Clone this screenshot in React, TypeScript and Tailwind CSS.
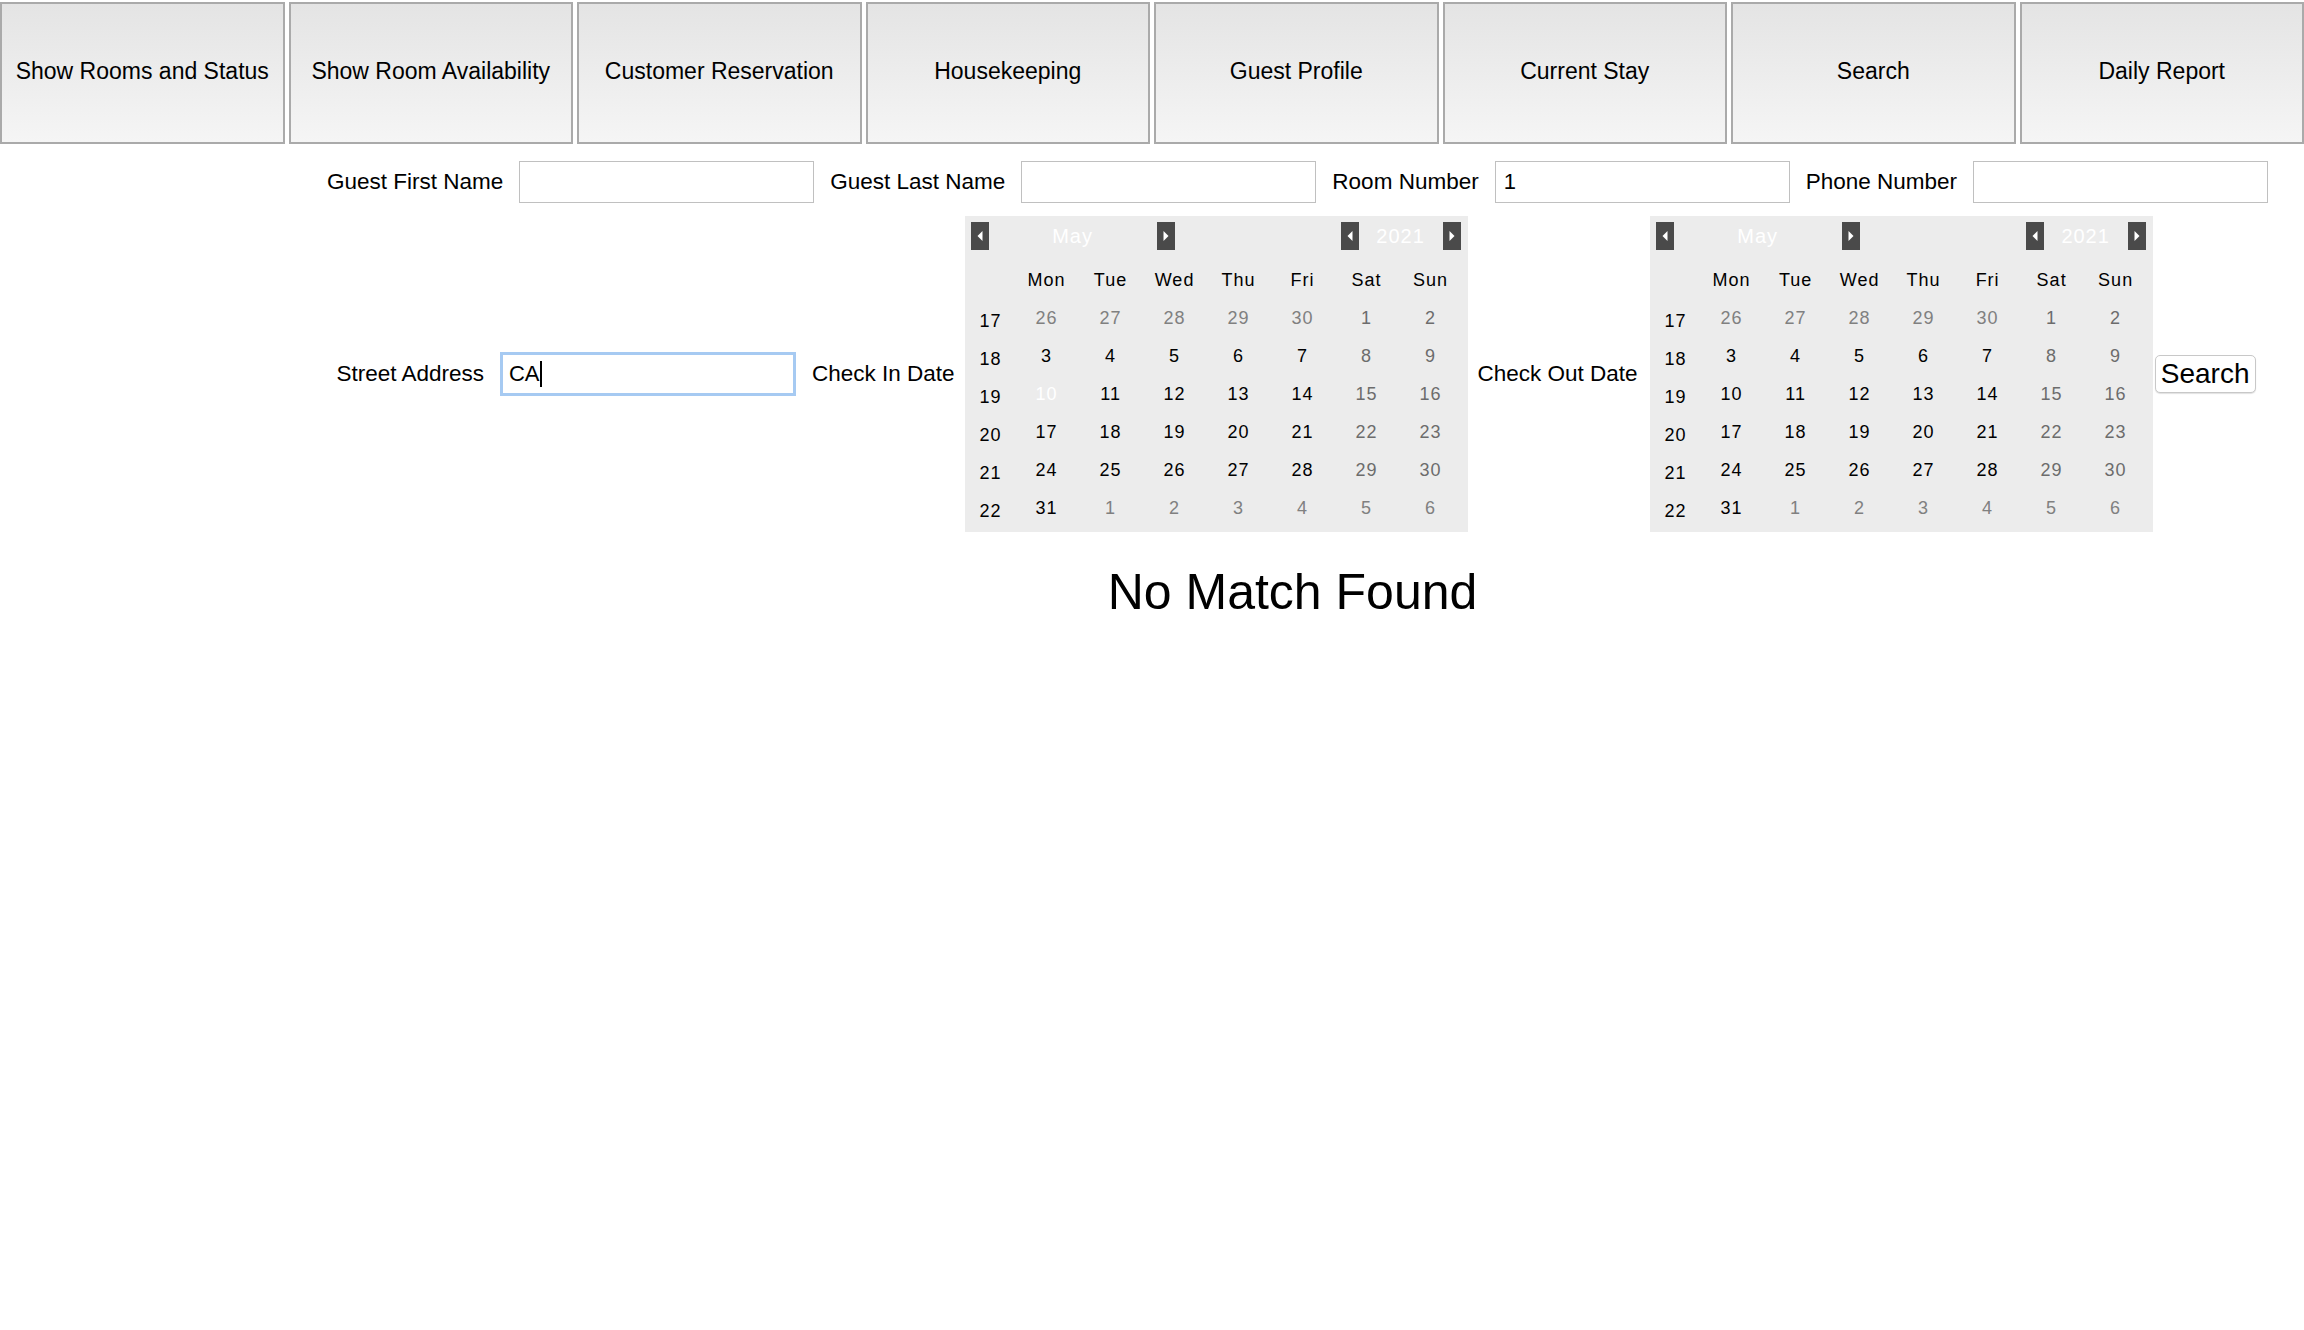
import React from "react";

const NAV = [
  "Show Rooms and Status",
  "Show Room Availability",
  "Customer Reservation",
  "Housekeeping",
  "Guest Profile",
  "Current Stay",
  "Search",
  "Daily Report",
];

type Cell = { d: number; kind: "out" | "wk" | "in" };

const WEEKS: { n: number; cells: Cell[] }[] = [
  {
    n: 17,
    cells: [
      { d: 26, kind: "out" },
      { d: 27, kind: "out" },
      { d: 28, kind: "out" },
      { d: 29, kind: "out" },
      { d: 30, kind: "out" },
      { d: 1, kind: "wk" },
      { d: 2, kind: "wk" },
    ],
  },
  ...[18, 19, 20, 21].map((n, i) => {
    const start = 3 + i * 7;
    return {
      n,
      cells: Array.from({ length: 7 }, (_, j) => ({
        d: start + j,
        kind: (j >= 5 ? "wk" : "in") as Cell["kind"],
      })),
    };
  }),
  {
    n: 22,
    cells: [
      { d: 31, kind: "in" },
      { d: 1, kind: "out" },
      { d: 2, kind: "out" },
      { d: 3, kind: "out" },
      { d: 4, kind: "out" },
      { d: 5, kind: "out" },
      { d: 6, kind: "out" },
    ],
  },
];

function Arrow({ dir }: { dir: "l" | "r" }) {
  return (
    <div className="w-[18px] h-[28px] bg-[#4a4a4a] flex items-center justify-center">
      <svg width="6" height="10" viewBox="0 0 6 10">
        {dir === "l" ? (
          <polygon points="5.5,0 5.5,10 0.5,5" fill="#ffffff" />
        ) : (
          <polygon points="0.5,0 0.5,10 5.5,5" fill="#ffffff" />
        )}
      </svg>
    </div>
  );
}

function Calendar({ selected, second }: { selected?: boolean; second?: boolean }) {
  const days = ["Mon", "Tue", "Wed", "Thu", "Fri", "Sat", "Sun"];
  return (
    <div
      className={`${second ? "ml-[4px] mr-[2px]" : "mx-[2px]"} w-[503px] h-[316px] bg-[#ececec] pt-[6px] pl-[6px] pr-[5px] pb-[5px] flex flex-col tracking-[1px] text-[18px] leading-none`}
    >
      <div className="flex h-[28px] items-center pr-[2px]">
        <Arrow dir="l" />
        <div className="w-[168px] text-center text-white text-[20px]">May</div>
        <Arrow dir="r" />
        <div className="flex-1" />
        <Arrow dir="l" />
        <div className="w-[84px] text-center text-white text-[20px]">2021</div>
        <Arrow dir="r" />
      </div>
      <div className="mt-[11px] grid grid-cols-[44px_repeat(7,64px)] h-[38px] items-center text-black">
        <div />
        {days.map((d) => (
          <div key={d} className="text-center">
            {d}
          </div>
        ))}
      </div>
      {WEEKS.map((w) => (
        <div
          key={w.n}
          className="grid grid-cols-[44px_repeat(7,64px)] h-[38px] items-center"
        >
          <div className="text-center text-black pt-[5px] pr-[4px]">{w.n}</div>
          {w.cells.map((c, i) => {
            const isSel = selected && w.n === 19 && c.d === 10;
            const color = isSel
              ? "text-white"
              : c.kind === "out"
              ? "text-[#808080]"
              : c.kind === "wk"
              ? "text-[#6c6c6c]"
              : "text-black";
            return (
              <div key={i} className={`text-center ${color}`}>
                {c.d}
              </div>
            );
          })}
        </div>
      ))}
    </div>
  );
}

function Label({ children }: { children: React.ReactNode }) {
  return (
    <div className="mx-[8px] text-[22.5px] leading-none whitespace-nowrap text-black">
      {children}
    </div>
  );
}

function TextBox({ value }: { value?: string }) {
  return (
    <div className="mx-[8px] w-[295px] h-[42px] border border-[#c0c0c0] bg-white flex items-center px-[8px] text-[22px] leading-none text-black">
      {value}
    </div>
  );
}

export default function App() {
  return (
    <div className="w-[2304px] h-[1330px] bg-white font-['Liberation_Sans',Arial,sans-serif] text-black">
      <div className="flex gap-[4px] pt-[2px]">
        {NAV.map((n) => (
          <div
            key={n}
            className="flex-1 h-[142px] border-2 border-[#aaaaaa] bg-linear-to-b from-[#e4e4e4] to-[#f5f5f5] flex items-center justify-center pb-[3px] text-[23px] leading-none whitespace-nowrap"
          >
            {n}
          </div>
        ))}
      </div>

      <div className="mt-[17px] pl-[291px] flex items-center justify-center">
        <Label>Guest First Name</Label>
        <TextBox />
        <Label>Guest Last Name</Label>
        <TextBox />
        <Label>Room Number</Label>
        <TextBox value="1" />
        <Label>Phone Number</Label>
        <TextBox />
      </div>

      <div className="mt-[13px] pl-[280px] flex items-center justify-center">
        <Label>Street Address</Label>
        <div className="mx-[8px] w-[296px] h-[44px] border-[3px] border-[#a6caf2] bg-white flex items-center px-[6px] text-[22px] leading-none">
          <span>CA</span>
          <span className="inline-block w-[2px] h-[26px] bg-black" />
        </div>
        <Label>Check In Date</Label>
        <Calendar selected />
        <Label>Check Out Date</Label>
        <Calendar second />
        <button className="w-[101px] h-[38px] bg-white border border-[#c8c8c8] rounded-[5px] shadow-[0_1px_1px_rgba(0,0,0,0.12)] text-[28px] leading-none text-black flex items-center justify-center">
          Search
        </button>
      </div>

      <div className="mt-[35px] pl-[281px] flex justify-center">
        <div className="text-[50px] leading-none">No Match Found</div>
      </div>
    </div>
  );
}
